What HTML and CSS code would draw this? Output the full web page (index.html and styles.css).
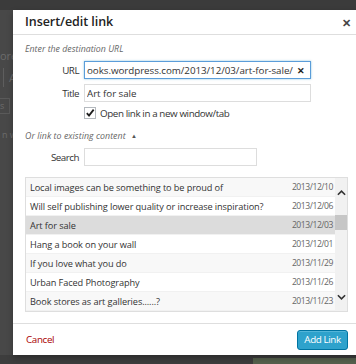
FILE: index.html
```html
<!DOCTYPE html>
<html lang="en">
<head>
  <meta charset="UTF-8" />
  <title>Insert/edit link</title>
  <link rel="stylesheet" href="styles.css">
</head>
<body>

  <!-- Admin page behind the overlay -->
  <div class="page">
    <div class="topbar"></div>
    <div class="page-content">
      <p class="ghost-text">ores</p>
      <div class="ghost-btn">Ad</div>
      <div class="ghost-row"><span class="ghost-box">s</span></div>
      <p class="ghost-text small">n wi</p>
    </div>
    <div class="bottombar"><span class="green-bar"></span></div>
  </div>

  <div class="modal">
    <div class="modal-header">
      <h1>Insert/edit link</h1>
      <span class="close">&#10005;</span>
    </div>

    <div class="modal-body">
      <p class="hint">Enter the destination URL</p>

      <div class="field">
        <label>URL</label>
        <div class="input focus">
          <span class="value">ooks.wordpress.com/2013/12/03/art-for-sale/</span>
          <span class="clear">&#10005;</span>
        </div>
      </div>

      <div class="field">
        <label>Title</label>
        <div class="input"><span class="value">Art for sale</span></div>
      </div>

      <div class="check-row">
        <span class="checkbox">
          <svg viewBox="0 0 12 12" width="12" height="12"><path d="M2.2 6.2 L4.8 9 L10.4 2" fill="none" stroke="#1e1e1e" stroke-width="2.2"/></svg>
        </span>
        <span>Open link in a new window/tab</span>
      </div>

      <p class="hint toggle">Or link to existing content <span class="arrow">&#9650;</span></p>

      <div class="field">
        <label>Search</label>
        <div class="input search"></div>
      </div>

      <div class="results">
        <ul class="list">
          <li class="alt"><span>Local images can be something to be proud of</span><span class="date">2013/12/10</span></li>
          <li><span>Will self publishing lower quality or increase inspiration?</span><span class="date">2013/12/06</span></li>
          <li class="selected"><span>Art for sale</span><span class="date">2013/12/03</span></li>
          <li><span>Hang a book on your wall</span><span class="date">2013/12/01</span></li>
          <li class="alt"><span>If you love what you do</span><span class="date">2013/11/29</span></li>
          <li><span>Urban Faced Photography</span><span class="date">2013/11/26</span></li>
          <li class="alt"><span>Book stores as art galleries......?</span><span class="date">2013/11/23</span></li>
        </ul>
        <div class="scrollbar">
          <svg class="arrow-up" viewBox="0 0 10 6" width="9" height="6"><path d="M1 5 L5 1 L9 5" fill="none" stroke="#333" stroke-width="1.8"/></svg>
          <div class="thumb"></div>
          <svg class="arrow-down" viewBox="0 0 10 6" width="9" height="6"><path d="M1 1 L5 5 L9 1" fill="none" stroke="#333" stroke-width="1.8"/></svg>
        </div>
      </div>
    </div>

    <div class="modal-footer">
      <a href="#" class="cancel">Cancel</a>
      <button class="add-link">Add Link</button>
    </div>
  </div>

</body>
</html>
```

FILE: styles.css
```css
/* Reset and base */
* { margin: 0; padding: 0; box-sizing: border-box; }
body {
  font-family: 'Open Sans', 'Noto Sans', sans-serif;
  background: #484848;
  width: 356px;
  height: 364px;
  overflow: hidden;
  position: relative;
  color: #333;
}

/* Page behind the overlay */
.page {
  display: flex;
  flex-direction: column;
  height: 364px;
}
.topbar { height: 10px; background: #3b3b3b; }
.page-content {
  flex: 1;
  padding-top: 39px;
  color: #6c6c6c;
  font-size: 11px;
}
.ghost-text { line-height: 14px; }
.ghost-btn {
  margin-top: 5px;
  width: 24px;
  height: 19px;
  border-left: 1px solid #5e5e5e;
  margin-left: 3px;
  padding-left: 5px;
  line-height: 19px;
}
.ghost-row { margin-top: 10px; height: 16px; }
.ghost-box {
  display: inline-block;
  width: 10px;
  height: 16px;
  border: 1px solid #5a5a5a;
  border-left: none;
  font-size: 9px;
  line-height: 14px;
}
.ghost-text.small { margin-top: 15px; font-size: 9px; padding-left: 2px; }
.bottombar {
  height: 9px;
  background: #3d3d3d;
  display: flex;
  justify-content: flex-end;
  align-items: flex-end;
}
.green-bar { width: 103px; height: 6px; background: #55604d; }

/* Modal */
.modal {
  position: absolute;
  top: 10px;
  left: 13px;
  width: 362px;
  height: 345px;
  background: #fff;
  box-shadow: 0 3px 6px rgba(0,0,0,0.3);
  display: flex;
  flex-direction: column;
}
.modal-header {
  height: 25px;
  border-bottom: 1px solid #dedede;
  display: flex;
  align-items: center;
  padding-left: 12px;
  position: relative;
}
.modal-header h1 {
  font-size: 12.5px;
  font-weight: 600;
  letter-spacing: -0.05px;
  color: #222;
  line-height: 20px;
}
.close {
  position: absolute;
  left: 329px;
  top: 5px;
  font-size: 11px;
  font-weight: 700;
  color: #444;
}

.modal-body {
  flex: 1;
  padding: 8px 0 0 12px;
  display: flex;
  flex-direction: column;
}
.hint {
  font-size: 8.8px;
  font-style: italic;
  color: #666;
  line-height: 12px;
  margin-bottom: 6px;
}
.hint.toggle { margin-top: 11px; letter-spacing: 0.05px; }
.arrow { font-style: normal; font-size: 6px; vertical-align: 1px; margin-left: 3px; color: #555; }

.field {
  display: flex;
  align-items: center;
  gap: 5px;
  margin-bottom: 5px;
}
.field label {
  width: 54px;
  text-align: right;
  font-size: 9.8px;
  letter-spacing: -0.5px;
  color: #333;
}
.input {
  width: 227px;
  height: 18px;
  border: 1px solid #ddd;
  display: flex;
  align-items: center;
  padding: 0 5px 0 2px;
  font-size: 9.8px;
  letter-spacing: -0.05px;
  color: #333;
  white-space: nowrap;
  overflow: hidden;
}
.input.focus {
  border-color: #5b9dd9;
  box-shadow: 0 0 2px rgba(30,140,190,0.5);
}
.input .value { flex: 1; overflow: hidden; }
.clear { font-size: 9px; font-weight: 700; color: #222; }
.input.search { width: 173px; }

.check-row {
  display: flex;
  align-items: center;
  gap: 4px;
  padding-left: 59px;
  font-size: 9.8px;
  letter-spacing: -0.4px;
  height: 12px;
}
.checkbox {
  width: 12px;
  height: 12px;
  border: 1px solid #b4b9be;
  display: flex;
  align-items: center;
  justify-content: center;
}

/* Results list */
.results {
  margin-top: 6px;
  width: 323px;
  height: 135px;
  border: 1px solid #dedede;
  display: flex;
}
.list {
  list-style: none;
  flex: 1;
}
.list li {
  height: 19px;
  border-bottom: 1px solid #f1f1f1;
  display: flex;
  justify-content: space-between;
  align-items: center;
  padding: 0 2px 0 4px;
  font-size: 9.2px;
  letter-spacing: -0.1px;
  color: #333;
  white-space: nowrap;
}
.list li.alt { background: #f8f8f8; }
.list li.selected { background: #dcdcdc; }
.list .date { font-size: 8.6px; letter-spacing: -0.45px; color: #666; }

.scrollbar {
  width: 12px;
  background: #f1f1f1;
  display: flex;
  flex-direction: column;
  align-items: center;
  padding-top: 12px;
}
.thumb {
  width: 12px;
  height: 15px;
  background: #c6c6c6;
  margin-top: 19px;
}
.arrow-down { margin-top: 64px; }

/* Footer */
.modal-footer {
  height: 32px;
  border-top: 1px solid #dedede;
  display: flex;
  align-items: center;
  padding: 0 14px 0 13px;
}
.cancel {
  color: #a00;
  font-size: 9.8px;
  letter-spacing: -0.35px;
  text-decoration: none;
  flex: 1;
}
.add-link {
  width: 51px;
  height: 20px;
  margin-right: 13px;
  background: #2ea2cc;
  border: 1px solid #0074a2;
  border-radius: 3px;
  color: #fff;
  font-family: 'Open Sans', sans-serif;
  font-size: 9.8px;
  letter-spacing: -0.4px;
  box-shadow: inset 0 1px 0 rgba(120,200,230,0.5);
}
```
